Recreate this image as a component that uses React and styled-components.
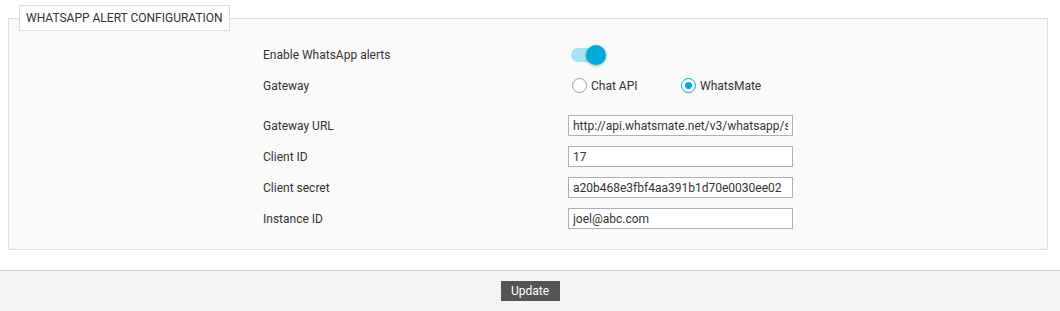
import React, { useState } from "react";
import styled, { createGlobalStyle } from "styled-components";

const GlobalStyle = createGlobalStyle`
  html, body { margin: 0; padding: 0; background: #fff; }
  body { font-family: Roboto, "Liberation Sans", Arial, sans-serif; font-size: 12px; color: #333; }
  * { box-sizing: border-box; }
`;

const Page = styled.div`
  width: 1060px;
  height: 311px;
  display: flex;
  flex-direction: column;
`;

const Fieldset = styled.fieldset`
  margin: 5px 12px 0 8px;
  padding: 8px 10px 15px 10px;
  border: 1px solid #dddddd;
  background: #fafafa;
  min-width: 0;
`;

const Legend = styled.legend`
  padding: 0 6px;
  height: 26px;
  line-height: 24px;
  border: 1px solid #dddddd;
  background: #fff;
  font-size: 12px;
  color: #333;
  text-transform: uppercase;
`;

const Form = styled.div`
  display: grid;
  grid-template-columns: 305px 225px;
  grid-template-rows: 31px 31px 9px repeat(4, 31px);
  justify-content: center;
  align-items: center;
`;

const Label = styled.div`
  font-size: 12px;
  color: #333;
  line-height: 14px;
`;

const Control = styled.div`
  display: flex;
  align-items: center;
`;

const Spacer = styled.div`
  grid-column: 1 / -1;
  height: 9px;
`;

const SwitchWrap = styled.button`
  position: relative;
  width: 38px;
  height: 20px;
  padding: 0;
  border: 0;
  background: transparent;
  cursor: pointer;
`;

const Track = styled.span`
  position: absolute;
  left: 3px;
  top: 3px;
  width: 34px;
  height: 14px;
  border-radius: 7px;
  background: ${(p) => (p.$on ? "#a6e2f4" : "#cfcfcf")};
`;

const Knob = styled.span`
  position: absolute;
  top: 0;
  left: ${(p) => (p.$on ? "18px" : "0")};
  width: 20px;
  height: 20px;
  border-radius: 50%;
  background: ${(p) => (p.$on ? "#00aad9" : "#f1f1f1")};
  box-shadow: 0 1px 3px rgba(0, 0, 0, 0.35);
`;

const RadioGroup = styled.div`
  display: flex;
  align-items: center;
  padding-left: 4px;
`;

const RadioOption = styled.label`
  display: flex;
  align-items: center;
  width: 109px;
  cursor: pointer;
  font-size: 12px;
  color: #333;
`;

const RadioCircle = styled.span`
  width: 15px;
  height: 15px;
  border-radius: 50%;
  border: 1px solid ${(p) => (p.$checked ? "#00aad9" : "#a0a0a0")};
  background: #fff;
  display: flex;
  align-items: center;
  justify-content: center;
  margin-right: 4px;
  flex: none;
  &::after {
    content: "";
    width: 7px;
    height: 7px;
    border-radius: 50%;
    background: ${(p) => (p.$checked ? "#00aad9" : "transparent")};
  }
`;

const TextInput = styled.input`
  width: 225px;
  height: 21px;
  border: 1px solid #a9b0be;
  background: #fff;
  padding: 0 4px;
  font-family: Roboto, "Liberation Sans", Arial, sans-serif;
  font-size: 12px;
  color: #333;
  outline: none;
`;

const Footer = styled.div`
  margin-top: 20px;
  border-top: 1px solid #d2d2d2;
  background: #f4f4f4;
  flex: 1;
  display: flex;
  justify-content: center;
  align-items: flex-start;
  padding-top: 10px;
`;

const Button = styled.button`
  width: 59px;
  height: 20px;
  border: 0;
  background: #555555;
  color: #fff;
  font-family: Roboto, "Liberation Sans", Arial, sans-serif;
  font-size: 12px;
  padding: 0;
  cursor: pointer;
`;

const fields = [
  { label: "Gateway URL", value: "http://api.whatsmate.net/v3/whatsapp/single/text/message/" },
  { label: "Client ID", value: "17" },
  { label: "Client secret", value: "a20b468e3fbf4aa391b1d70e0030ee02" },
  { label: "Instance ID", value: "joel@abc.com" },
];

export default function App() {
  const [on, setOn] = useState(true);
  const [gateway, setGateway] = useState("whatsmate");
  return (
    <Page>
      <GlobalStyle />
      <Fieldset>
        <Legend>WhatsApp Alert Configuration</Legend>
        <Form>
          <Label>Enable WhatsApp alerts</Label>
          <Control>
            <SwitchWrap type="button" onClick={() => setOn(!on)} aria-pressed={on}>
              <Track $on={on} />
              <Knob $on={on} />
            </SwitchWrap>
          </Control>
          <Label>Gateway</Label>
          <RadioGroup>
            <RadioOption onClick={() => setGateway("chatapi")}>
              <RadioCircle $checked={gateway === "chatapi"} />
              Chat API
            </RadioOption>
            <RadioOption onClick={() => setGateway("whatsmate")}>
              <RadioCircle $checked={gateway === "whatsmate"} />
              WhatsMate
            </RadioOption>
          </RadioGroup>
          <Spacer />
          {fields.map((f) => (
            <React.Fragment key={f.label}>
              <Label>{f.label}</Label>
              <Control>
                <TextInput defaultValue={f.value} />
              </Control>
            </React.Fragment>
          ))}
        </Form>
      </Fieldset>
      <Footer>
        <Button type="button">Update</Button>
      </Footer>
    </Page>
  );
}
